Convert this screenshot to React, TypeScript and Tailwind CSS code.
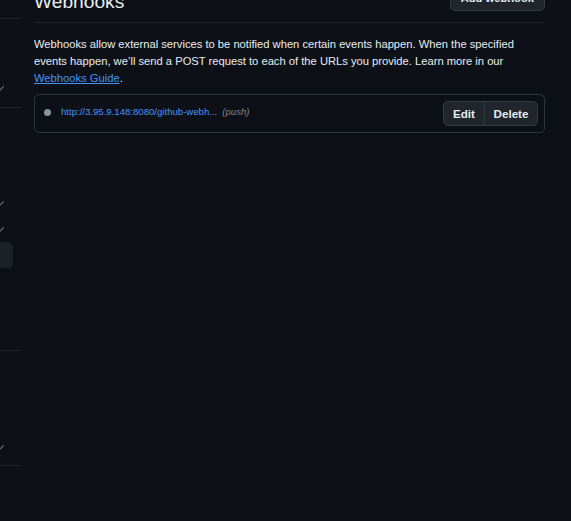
import React from "react";

function Check() {
  return (
    <svg width="9" height="9" viewBox="0 0 16 16" className="-ml-[4px] text-[#7d8590]" fill="currentColor">
      <path d="M13.78 4.22a.75.75 0 0 1 0 1.06l-7.25 7.25a.75.75 0 0 1-1.06 0L2.22 9.28a.75.75 0 0 1 1.06-1.06L6 10.94l6.72-6.72a.75.75 0 0 1 1.06 0Z" />
    </svg>
  );
}

export default function App() {
  return (
    <div className="h-[521px] w-[571px] overflow-hidden bg-[#0d1117] flex text-[#e6edf3] font-['Liberation_Sans',Arial,sans-serif]">
      <aside className="w-[21px] shrink-0 flex flex-col">
        <div className="h-[18px]" />
        <div className="h-px bg-[#21262d]" />
        <div className="h-[56px]" />
        <div className="h-[26px] flex items-center"><Check /></div>
        <div className="h-[6px]" />
        <div className="h-px bg-[#21262d]" />
        <div className="h-[82px]" />
        <div className="h-[26px] flex items-center"><Check /></div>
        <div className="h-[26px] flex items-center"><Check /></div>
        <div className="h-[26px] w-[13px] rounded-r-[5px] bg-[#1c2128]" />
        <div className="h-[82px]" />
        <div className="h-px bg-[#21262d]" />
        <div className="h-[83px]" />
        <div className="h-[26px] flex items-center"><Check /></div>
        <div className="h-[5px]" />
        <div className="h-px bg-[#21262d]" />
      </aside>

      <main className="ml-[13px] w-[511px] shrink-0 -mt-[30px] flex flex-col">
        <div className="flex items-end justify-between h-[41px]">
          <h2 className="text-[19.2px] leading-[24px] font-normal -mb-[3px]">Webhooks</h2>
          <button className="h-[26px] px-[10px] rounded-[5px] bg-[#21262d] border border-[#363b42] text-[11.2px] font-semibold text-[#e6edf3]">
            Add webhook
          </button>
        </div>
        <div className="h-[11px]" />
        <div className="h-px bg-[#21262d]" />
        <p className="mt-[13px] text-[11.2px] leading-[16.8px]">
          Webhooks allow external services to be notified when certain events happen. When the specified events happen, we’ll send a POST request to each of the URLs you provide. Learn more in our{" "}
          <a href="#" className="text-[#4493f8] underline">Webhooks Guide</a>.
        </p>
        <div className="mt-[8px] rounded-[5px] border border-[#30363d] p-[6px] pl-[9px] flex items-center justify-between">
          <div className="flex items-center">
            <span className="w-[7px] h-[7px] rounded-full bg-[#8b949e] -mt-[3px]" />
            <a href="#" className="ml-[10px] text-[9.6px] text-[#4493f8] -mt-[3px]">http://3.95.9.148:8080/github-webh...</a>
            <span className="ml-[5px] text-[9.6px] italic text-[#7d8590] -mt-[3px]">(push)</span>
          </div>
          <div className="flex h-[25px] rounded-[5px] border border-[#363b42] bg-[#21262d] text-[11.6px] font-semibold text-[#e6edf3]">
            <button className="w-[40px] h-full">Edit</button>
            <button className="w-[53px] h-full border-l border-[#363b42]">Delete</button>
          </div>
        </div>
      </main>
    </div>
  );
}
